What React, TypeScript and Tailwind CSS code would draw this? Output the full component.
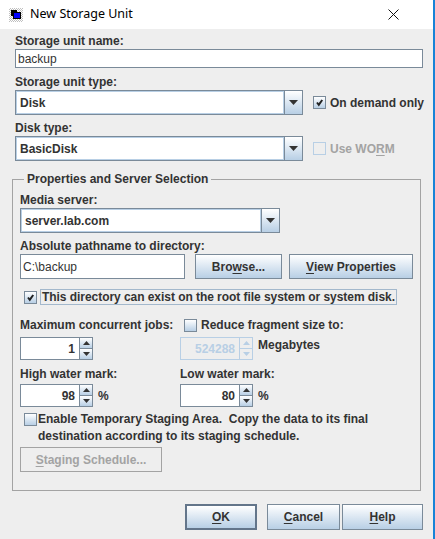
import React from "react";

// Swing "Ocean" look: grey-blue borders and light blue gradients
const label = "text-[12px] font-bold leading-[14px] text-[#333333] whitespace-nowrap";
const gradient = "bg-gradient-to-b from-[#ffffff] to-[#b8cfe5]";

function Mn({ children }: { children: React.ReactNode }) {
  return <span className="underline underline-offset-2">{children}</span>;
}

function Arrow({ up, disabled }: { up?: boolean; disabled?: boolean }) {
  return (
    <svg width="7" height="4" viewBox="0 0 7 4" className="block">
      <path
        d={up ? "M0 4L3.5 0L7 4Z" : "M0 0L7 0L3.5 4Z"}
        fill={disabled ? "#b8cfe5" : "#333333"}
      />
    </svg>
  );
}

function Combo({ value, width, height }: { value: string; width: string; height: string }) {
  return (
    <div className={`flex shrink-0 ${width} ${height} border border-[#7a8a99] bg-white`}>
      <div className="flex-1 flex items-center pl-[3px] border border-[#b8cfe5] text-[12px] font-bold text-[#333333]">
        {value}
      </div>
      <div className={`w-[18px] flex items-center justify-center border-l border-[#7a8a99] ${gradient}`}>
        <svg width="9" height="5" viewBox="0 0 9 5">
          <path d="M0 0L9 0L4.5 5Z" fill="#333333" />
        </svg>
      </div>
    </div>
  );
}

function Check({ checked, disabled }: { checked?: boolean; disabled?: boolean }) {
  return (
    <div
      className={`w-[13px] h-[13px] shrink-0 border flex items-center justify-center ${
        disabled ? "border-[#b8cfe5] bg-[#eeeeee]" : `border-[#7a8a99] ${gradient}`
      }`}
    >
      {checked && (
        <svg width="9" height="9" viewBox="0 0 9 9">
          <path d="M2 4.5L3.8 6.8L7.2 2" stroke="#222222" strokeWidth="2" fill="none" />
        </svg>
      )}
    </div>
  );
}

function Spinner({
  value,
  disabled,
  height,
}: {
  value: string;
  disabled?: boolean;
  height: string;
}) {
  const line = disabled ? "border-[#b8cfe5]" : "border-[#7a8a99]";
  return (
    <div className={`flex shrink-0 w-[73px] ${height}`}>
      <div
        className={`w-[60px] border ${line} flex items-center justify-end pr-[4px] text-[12px] font-bold ${
          disabled ? "bg-[#eeeeee] text-[#b8cfe5]" : "bg-white text-[#333333]"
        }`}
      >
        {value}
      </div>
      <div className={`w-[13px] flex flex-col border-y border-r ${line}`}>
        <div className={`flex-1 flex items-center justify-center border-b ${line} ${disabled ? "" : gradient}`}>
          <Arrow up disabled={disabled} />
        </div>
        <div className={`flex-1 flex items-center justify-center ${disabled ? "" : gradient}`}>
          <Arrow disabled={disabled} />
        </div>
      </div>
    </div>
  );
}

function Button({
  children,
  width,
  height,
  focused,
  disabled,
}: {
  children: React.ReactNode;
  width: string;
  height: string;
  focused?: boolean;
  disabled?: boolean;
}) {
  return (
    <div
      className={`${width} ${height} shrink-0 flex items-center justify-center text-[12px] font-bold whitespace-nowrap ${
        disabled
          ? "border border-[#a3a3a3] text-[#a3a3a3]"
          : focused
          ? `border-2 border-[#63758a] text-[#333333] ${gradient}`
          : `border border-[#7a8a99] text-[#333333] ${gradient}`
      }`}
    >
      {children}
    </div>
  );
}

export default function App() {
  return (
    <div className="w-[435px] h-[539px] bg-[#eeeeee] border-r-2 border-[#1883d7] font-['Liberation_Sans',Arial,sans-serif] flex flex-col overflow-hidden">
      {/* Title bar */}
      <div className="h-[29px] bg-white flex items-center shrink-0">
        <div className="ml-[9px] w-[14px] h-[14px] bg-[repeating-conic-gradient(#c0c0c0_0_25%,#ffffff_0_50%)] bg-[length:2px_2px] relative">
          <div className="absolute left-[2px] top-[2px] w-[6px] h-[6px] bg-black" />
          <div className="absolute left-[4px] top-[4px] w-[8px] h-[7px] bg-[#0000ff] border border-black" />
        </div>
        <div className="ml-[7px] text-[12.5px] text-black font-['Noto_Sans',sans-serif]">New Storage Unit</div>
        <svg width="11" height="11" viewBox="0 0 11 11" className="ml-auto mr-[34px]">
          <path d="M0.5 0.5L10.5 10.5M10.5 0.5L0.5 10.5" stroke="#111111" strokeWidth="1" />
        </svg>
      </div>

      {/* Body */}
      <div className="flex flex-col pl-[15px] pr-[10px] pt-[5px]">
        <div className={label}>Storage unit name:</div>
        <div className="mt-[1px] h-[19px] border border-[#7a8a99] bg-white flex items-center pl-[2px] text-[12px] text-[#333333]">
          backup
        </div>

        <div className={`${label} mt-[7px]`}>Storage unit type:</div>
        <div className="mt-[1px] flex items-center">
          <Combo value="Disk" width="w-[288px]" height="h-[25px]" />
          <div className="ml-[10px]">
            <Check checked />
          </div>
          <div className="ml-[4px] text-[12px] font-bold text-[#333333] whitespace-nowrap">On demand only</div>
        </div>

        <div className={`${label} mt-[6px]`}>Disk type:</div>
        <div className="mt-[1px] flex items-center">
          <Combo value="BasicDisk" width="w-[288px]" height="h-[25px]" />
          <div className="ml-[10px]">
            <Check disabled />
          </div>
          <div className="ml-[4px] text-[12px] font-bold text-[#a3a3a3] whitespace-nowrap">
            Use WO<Mn>R</Mn>M
          </div>
        </div>

        {/* Group */}
        <fieldset className="mt-[11px] -ml-[3px] w-[409px] border border-[#a3a3a3] pl-[7px] pr-[7px] pb-[18px]">
          <legend className={`${label} ml-[4px] px-[3px]`}>Properties and Server Selection</legend>

          <div className={`${label} mt-[7px]`}>Media server:</div>
          <div className="mt-[1px]">
            <Combo value="server.lab.com" width="w-[260px]" height="h-[25px]" />
          </div>

          <div className={`${label} mt-[6px]`}>Absolute pathname to directory:</div>
          <div className="mt-[1px] flex items-center h-[25px]">
            <div className="w-[165px] h-[25px] border border-[#7a8a99] bg-white flex items-center pl-[2px] text-[12px] text-[#333333]">
              C:\backup
            </div>
            <div className="ml-[10px]">
              <Button width="w-[87px]" height="h-[25px]">
                Bro<Mn>w</Mn>se...
              </Button>
            </div>
            <div className="ml-[7px]">
              <Button width="w-[124px]" height="h-[25px]">
                <Mn>V</Mn>iew Properties
              </Button>
            </div>
          </div>

          <div className="mt-[10px] flex items-center h-[16px]">
            <div className="ml-[4px]">
              <Check checked />
            </div>
            <div className="ml-[3px] h-[16px] px-[1px] border border-[#a3b8cc] flex items-center text-[12px] tracking-[-0.05px] font-bold text-[#333333] whitespace-nowrap">
              This directory can exist on the root file system or system disk.
            </div>
          </div>

          <div className="mt-[13px] flex">
            <div className="w-[160px] flex flex-col">
              <div className={label}>Maximum concurrent jobs:</div>
              <div className="mt-[5px]">
                <Spinner value="1" height="h-[23px]" />
              </div>
            </div>
            <div className="flex flex-col">
              <div className="flex items-center h-[14px]">
                <div className="ml-[4px]">
                  <Check />
                </div>
                <div className={`${label} ml-[4px]`}>Reduce fragment size to:</div>
              </div>
              <div className="mt-[5px] flex items-start">
                <Spinner value="524288" disabled height="h-[23px]" />
                <div className={`${label} ml-[5px] mt-[1px]`}>Megabytes</div>
              </div>
            </div>
          </div>

          <div className="mt-[7px] flex">
            <div className="w-[160px] flex flex-col">
              <div className={label}>High water mark:</div>
              <div className="mt-[3px] flex items-center">
                <Spinner value="98" height="h-[23px]" />
                <div className={`${label} ml-[5px]`}>%</div>
              </div>
            </div>
            <div className="flex flex-col">
              <div className={label}>Low water mark:</div>
              <div className="mt-[3px] flex items-center">
                <Spinner value="80" height="h-[23px]" />
                <div className={`${label} ml-[5px]`}>%</div>
              </div>
            </div>
          </div>

          <div className="mt-[4px] flex items-start">
            <div className="ml-[4px] mt-[2px]">
              <Check />
            </div>
            <div className="ml-[1px] text-[12px] font-bold leading-[17px] text-[#333333] whitespace-nowrap">
              Enable Temporary Staging Area.&nbsp; Copy the data to its final
              <br />
              destination according to its staging schedule.
            </div>
          </div>

          <div className="mt-[2px]">
            <Button width="w-[142px]" height="h-[25px]" disabled>
              <Mn>S</Mn>taging Schedule...
            </Button>
          </div>
        </fieldset>

        {/* Dialog buttons */}
        <div className="mt-[13px] flex justify-end">
          <Button width="w-[72px]" height="h-[26px]" focused>
            <Mn>O</Mn>K
          </Button>
          <div className="ml-[10px]">
            <Button width="w-[73px]" height="h-[26px]">
              <Mn>C</Mn>ancel
            </Button>
          </div>
          <div className="ml-[2px]">
            <Button width="w-[81px]" height="h-[26px]">
              <Mn>H</Mn>elp
            </Button>
          </div>
        </div>
      </div>
    </div>
  );
}
